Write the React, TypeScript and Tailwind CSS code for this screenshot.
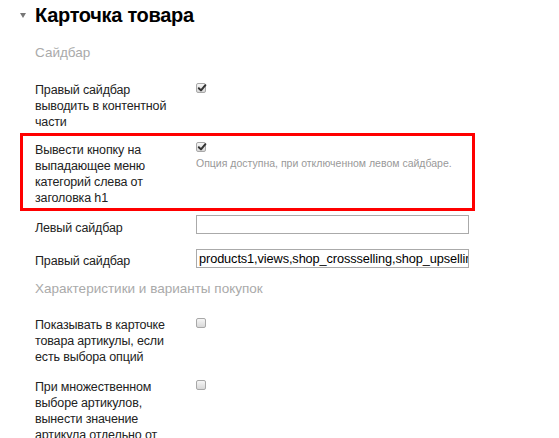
import React from "react";

function Check({ checked }: { checked?: boolean }) {
  return (
    <span className="relative block h-[10px] w-[10px] rounded-[2px] border border-[#a8a8a8] bg-gradient-to-b from-[#f6f6f6] to-[#d8d8d8]">
      {checked ? (
        <svg viewBox="0 0 10 10" className="absolute left-[0px] top-[-1px] h-[10px] w-[10px]">
          <path d="M1.8 5.2 L4 7.4 L8.4 2.2" fill="none" stroke="#333" strokeWidth="2" strokeLinecap="round" strokeLinejoin="round" />
        </svg>
      ) : null}
    </span>
  );
}

function Row({
  label,
  children,
  className = "",
}: {
  label: React.ReactNode;
  children?: React.ReactNode;
  className?: string;
}) {
  return (
    <div className={`flex items-start ${className}`}>
      <div className="w-[161px] shrink-0 pr-[20px] text-[12.5px] leading-[16px] tracking-[-0.15px] text-[#222]">{label}</div>
      <div className="flex-1">{children}</div>
    </div>
  );
}

export default function App() {
  const font = { fontFamily: '"Liberation Sans", Arial, sans-serif' };
  return (
    <div className="h-[438px] w-[559px] overflow-hidden bg-white" style={font}>
      {/* header */}
      <div className="flex h-[30px] items-center pl-[20px]">
        <span className="mr-[9px] mt-[1px] block h-0 w-0 border-x-[3.5px] border-t-[5px] border-x-transparent border-t-[#777]" />
        <h2 className="text-[20px] font-bold leading-[30px] tracking-[-0.3px] text-black">Карточка товара</h2>
      </div>

      <div className="w-[475px] pl-[35px]">
        <div className="mt-[13px] text-[13.5px] leading-[20px] text-[#aaa]">Сайдбар</div>

        <Row className="mt-[19px]" label="Правый сайдбар выводить в контентной части">
          <div className="pt-[1px]">
            <Check checked />
          </div>
        </Row>

        <div className="-ml-[15px] mt-[3px] border-[3px] border-[#f00] pb-[2px] pl-[12px] pt-[6px]">
          <Row label="Вывести кнопку на выпадающее меню категорий слева от заголовка h1">
            <Check checked />
            <div className="mt-[5px] text-[10.5px] leading-[13px] text-[#999]">
              Опция доступна, при отключенном левом сайдбаре.
            </div>
          </Row>
        </div>

        <Row className="mt-[4px]" label={<div className="pt-[5px]">Левый сайдбар</div>}>
          <div className="h-[19px] w-[273px] border border-[#aaa] bg-white" />
        </Row>

        <Row className="mt-[13px]" label={<div className="pt-[4px]">Правый сайдбар</div>}>
          <div className="h-[19px] w-[273px] overflow-hidden whitespace-nowrap border border-[#aaa] bg-white pl-[2px] text-[12.75px] leading-[17px] tracking-[-0.1px] text-black">
            products1,views,shop_crossselling,shop_upselling
          </div>
        </Row>

        <div className="mt-[10px] text-[13.5px] leading-[20px] text-[#aaa]">Характеристики и варианты покупок</div>

        <Row className="mt-[18px]" label="Показывать в карточке товара артикулы, если есть выбора опций">
          <div className="pt-[1px]">
            <Check />
          </div>
        </Row>

        <Row className="mt-[14px]" label="При множественном выборе артикулов, вынести значение артикула отдельно от названия">
          <div className="pt-[1px]">
            <Check />
          </div>
        </Row>
      </div>
    </div>
  );
}
